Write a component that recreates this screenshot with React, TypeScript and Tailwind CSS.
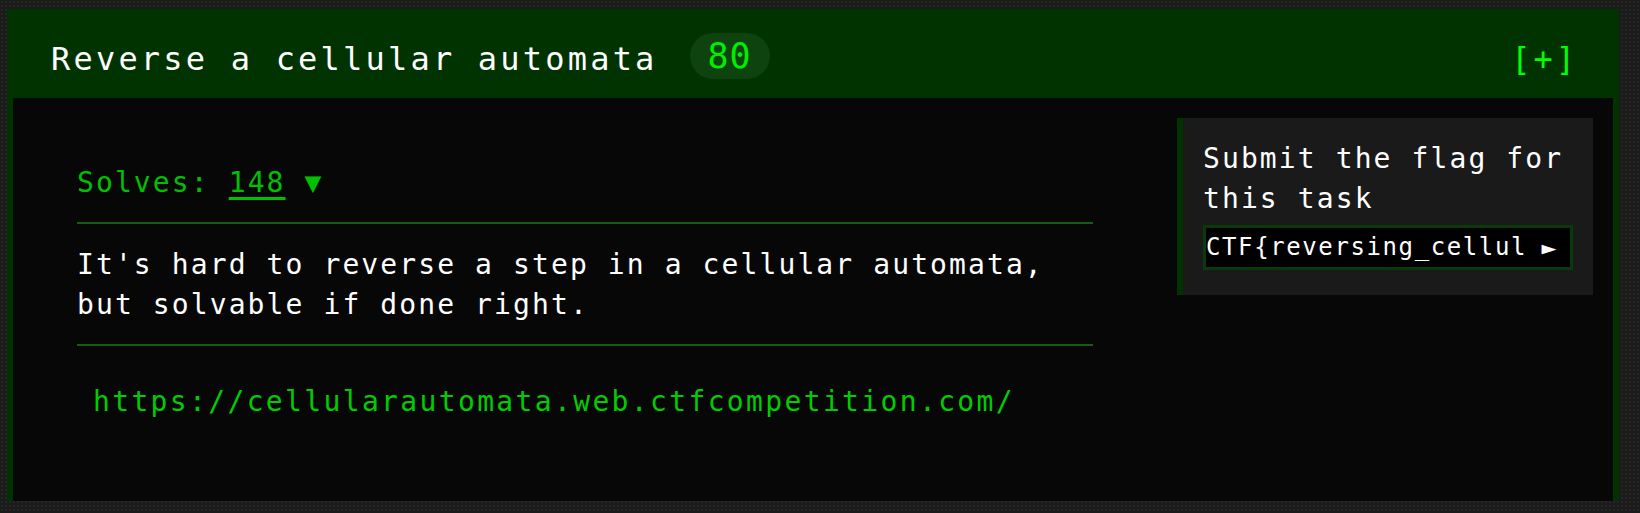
const mono = "font-['DejaVu_Sans_Mono','Liberation_Mono',monospace]";

function TaskHeader() {
  return (
    <div className="flex h-[89px] items-start pl-[44px] pr-[41px] pt-[24px]">
      <h2 className={`${mono} mt-[3px] text-[32px] leading-[46px] tracking-[3.2px] text-white`}>
        Reverse a cellular automata
      </h2>
      <span
        className={`${mono} ml-[32px] flex h-[46px] w-[80px] items-center justify-center rounded-full bg-[#0e420e] text-[35px] tracking-[1px] text-[#00ee00]`}
      >
        80
      </span>
      <button
        className={`${mono} ml-auto mt-[3px] text-[32px] leading-[46px] tracking-[3px] text-[#00ff00]`}
      >
        [+]
      </button>
    </div>
  );
}

function SubmitPanel() {
  return (
    <div className="ml-auto mr-[20px] mt-[20px] h-[177px] w-[416px] border-l-[6px] border-[#003300] bg-[#1a1a1a] px-[20px] pt-[21px]">
      <p className={`${mono} text-[28px] leading-[40px] tracking-[2.1px] text-white`}>
        Submit the flag for this task
      </p>
      <div className="mt-[6px] flex h-[45px] border-[3px] border-[#0a3a0a] bg-black">
        <input
          readOnly
          value="CTF{reversing_cellular_automata}"
          className={`${mono} min-w-0 flex-1 bg-transparent pl-0 text-[24px] leading-[39px] tracking-[1.6px] text-white outline-none`}
        />
        <button className={`${mono} w-[42px] text-[25px] leading-none text-white`}>►</button>
      </div>
    </div>
  );
}

export default function App() {
  return (
    <div className="min-h-screen bg-[#1b1b1b] bg-[radial-gradient(#262626_1px,transparent_1px)] bg-[size:4px_4px] pb-[6px] pl-[7px] pr-[21px] pt-[9px]">
      <div className="bg-[#003300]">
        <TaskHeader />
        <div className="mx-[6px] flex h-[403px] bg-[#070707]">
          <div className="w-[1080px] pl-[64px] pt-[65px]">
            <p className={`${mono} text-[28px] leading-[40px] tracking-[2.1px] text-[#00c000]`}>
              Solves:{" "}
              <a className="underline decoration-[3px] underline-offset-[5px]">148</a> ▼
            </p>
            <div className="mt-[19px] border-t-2 border-[#135e13]" />
            <p className={`${mono} mt-[21px] text-[28px] leading-[40px] tracking-[2.1px] text-white`}>
              It's hard to reverse a step in a cellular automata, but solvable if done right.
            </p>
            <div className="mt-[19px] border-t-2 border-[#135e13]" />
            <a
              className={`${mono} mt-[36px] block pl-[16px] text-[28px] leading-[40px] tracking-[2.35px] text-[#00cc00]`}
            >
              https://cellularautomata.web.ctfcompetition.com/
            </a>
          </div>
          <SubmitPanel />
        </div>
      </div>
    </div>
  );
}
